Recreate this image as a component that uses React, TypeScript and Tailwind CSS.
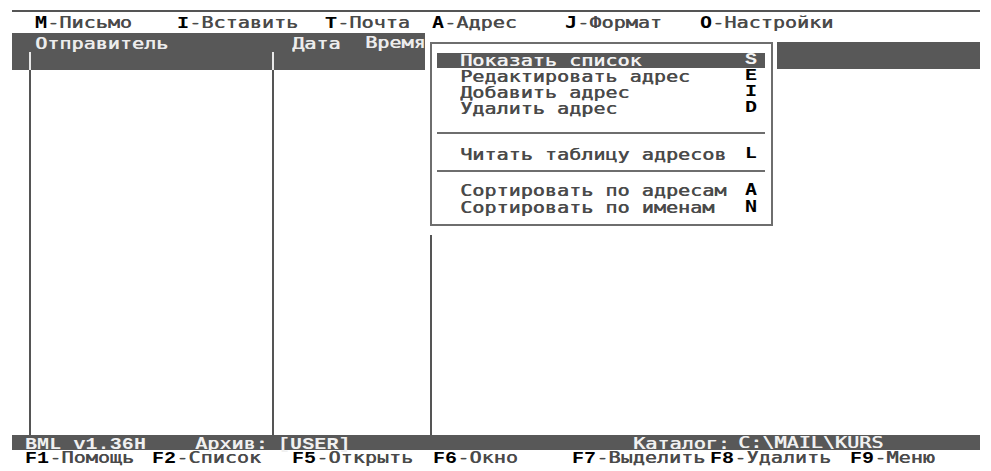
import React from "react";

// Text-mode mail client screen: menu bar, message list, address pull-down,
// status line and function-key hints.

// Glyphs are widened to the 12.1px character cell of the text screen.
const WIDE = "inline-block origin-left scale-x-[1.25] whitespace-pre leading-[14px] text-[16px]";
const SANS = "font-['DejaVu_Sans_Mono',monospace] tracking-[0.05px] [text-shadow:0.5px_0_currentColor]";
const KEY_SERIF = "font-['Liberation_Mono',monospace] font-bold tracking-[0.08px] text-black";
const KEY_SANS = "font-['DejaVu_Sans_Mono',monospace] font-bold tracking-[0.05px] text-black";

type MenuCell = { key: string; label: string; w: string; serif: boolean };

const topMenu: MenuCell[] = [
  { key: "M", label: "-Письмо", w: "w-[142px]", serif: false },
  { key: "I", label: "-Вставить", w: "w-[148px]", serif: true },
  { key: "T", label: "-Почта", w: "w-[107px]", serif: true },
  { key: "A", label: "-Адрес", w: "w-[133px]", serif: false },
  { key: "J", label: "-Формат", w: "w-[135px]", serif: false },
  { key: "O", label: "-Настройки", w: "w-[200px]", serif: false },
];

const fKeys: { key: string; label: string; w: string }[] = [
  { key: "F1", label: "-Помощь", w: "w-[127px]" },
  { key: "F2", label: "-Список", w: "w-[140px]" },
  { key: "F5", label: "-Открыть", w: "w-[141px]" },
  { key: "F6", label: "-Окно", w: "w-[139px]" },
  { key: "F7", label: "-Выделить", w: "w-[138px]" },
  { key: "F8", label: "-Удалить", w: "w-[140px]" },
  { key: "F9", label: "-Меню", w: "w-[120px]" },
];

// A run of screen text in the widened cell font
function Wide({ children, className = "" }: { children: React.ReactNode; className?: string }) {
  return <span className={`${WIDE} ${className}`}>{children}</span>;
}

// One hot-keyed cell: bold key followed by its label
function KeyCell({ k, label, w, serif }: { k: string; label: string; w: string; serif: boolean }) {
  return (
    <div className={`${w} flex items-center`}>
      <Wide>
        <span className={serif ? KEY_SERIF : KEY_SANS}>{k}</span>
        <span className={SANS}>{label}</span>
      </Wide>
    </div>
  );
}

function MenuRow({
  label,
  hotkey,
  serif = true,
  active = false,
  h = "h-[16px]",
}: {
  label: string;
  hotkey: string;
  serif?: boolean;
  active?: boolean;
  h?: string;
}) {
  return (
    <div className={`${h} flex items-center`}>
      <div className={`h-[15px] w-full flex items-center pl-[23px] ${active ? "bg-[#585858]" : ""}`}>
        <div className="w-[285px]">
          <Wide className={`${SANS} ${active ? "text-[#f2f2f2]" : "text-[#4a4a4a]"}`}>{label}</Wide>
        </div>
        <Wide className={`${serif ? KEY_SERIF : KEY_SANS} ${active ? "!text-[#f2f2f2]" : ""}`}>{hotkey}</Wide>
      </div>
    </div>
  );
}

function AddressMenu() {
  return (
    <div className="absolute left-[425px] top-[33px] w-[352px] h-[202px] bg-white pl-[5px] pr-[4px] pt-[9px] pb-[9px] flex">
      <div className="flex-1 border-2 border-[#6e6e6e] pl-[5px] pr-[6px] pt-[8px] flex flex-col">
        <MenuRow label="Показать список" hotkey="S" active />
        <MenuRow label="Редактировать адрес" hotkey="E" />
        <MenuRow label="Добавить адрес" hotkey="I" />
        <MenuRow label="Удалить адрес" hotkey="D" />
        <div className="h-[16px]" />
        <div className="h-[2px] bg-[#6e6e6e]" />
        <div className="h-[12px]" />
        <MenuRow label="Читать таблицу адресов" hotkey="L" />
        <div className="h-[8px]" />
        <div className="h-[2px] bg-[#6e6e6e]" />
        <div className="h-[10px]" />
        <MenuRow label="Сортировать по адресам" hotkey="A" serif={false} />
        <MenuRow label="Сортировать по именам" hotkey="N" serif={false} h="h-[18px]" />
      </div>
    </div>
  );
}

function ListPane() {
  return (
    <div className="w-[420px] flex flex-col">
      {/* column header */}
      <div className="h-[37px] bg-[#585858] flex flex-col">
        <div className="h-[19px] flex items-center text-[#ececec]">
          <div className="ml-[23px] w-[257px]">
            <Wide className={SANS}>Отправитель</Wide>
          </div>
          <div className="w-[73px]">
            <Wide className={SANS}>Дата</Wide>
          </div>
          <Wide className={SANS}>Время</Wide>
        </div>
        <div className="h-[18px] flex">
          <div className="w-[17px]" />
          <div className="w-[2px] bg-[#e8e8e8]" />
          <div className="w-[241px]" />
          <div className="w-[2px] bg-[#e8e8e8]" />
        </div>
      </div>
      {/* list columns */}
      <div className="flex-1 flex">
        <div className="w-[17px]" />
        <div className="w-[243px] border-l-2 border-[#555555]" />
        <div className="w-[160px] border-l-2 border-r-2 border-[#555555]" />
      </div>
    </div>
  );
}

function ViewPane() {
  return (
    <div className="flex-1 flex flex-col">
      <div className="mt-[9px] h-[27px] bg-[#585858]" />
    </div>
  );
}

export default function App() {
  return (
    <div className="w-[991px] h-[471px] bg-white overflow-hidden relative text-[#4a4a4a]">
      <div className="ml-[12px] w-[968px] h-full flex flex-col">
        {/* frame rule */}
        <div className="mt-[10px] h-[2px] bg-[#555555]" />

        {/* main menu */}
        <div className="h-[21px] flex items-center pl-[23px]">
          {topMenu.map((m) => (
            <KeyCell key={m.key} k={m.key} label={m.label} w={m.w} serif={m.serif} />
          ))}
        </div>

        {/* panes */}
        <div className="h-[402px] flex">
          <ListPane />
          <ViewPane />
        </div>

        {/* status line */}
        <div className="h-[15px] bg-[#585858] flex items-center pl-[13px] text-[#f0f0f0]">
          <div className="w-[170px]">
            <Wide className={`${KEY_SERIF} !text-[#f0f0f0]`}>BML v1.36H</Wide>
          </div>
          <div className="w-[83px]">
            <Wide className={SANS}>Архив:</Wide>
          </div>
          <div className="w-[355px]">
            <Wide className={`${KEY_SERIF} !text-[#f0f0f0]`}>[USER]</Wide>
          </div>
          <div className="w-[105px]">
            <Wide className={SANS}>Каталог:</Wide>
          </div>
          <Wide className={SANS}>C:\MAIL\KURS</Wide>
        </div>

        {/* function keys */}
        <div className="h-[16px] flex items-center pl-[13px]">
          {fKeys.map((f) => (
            <KeyCell key={f.key} k={f.key} label={f.label} w={f.w} serif />
          ))}
        </div>
      </div>

      <AddressMenu />
    </div>
  );
}
